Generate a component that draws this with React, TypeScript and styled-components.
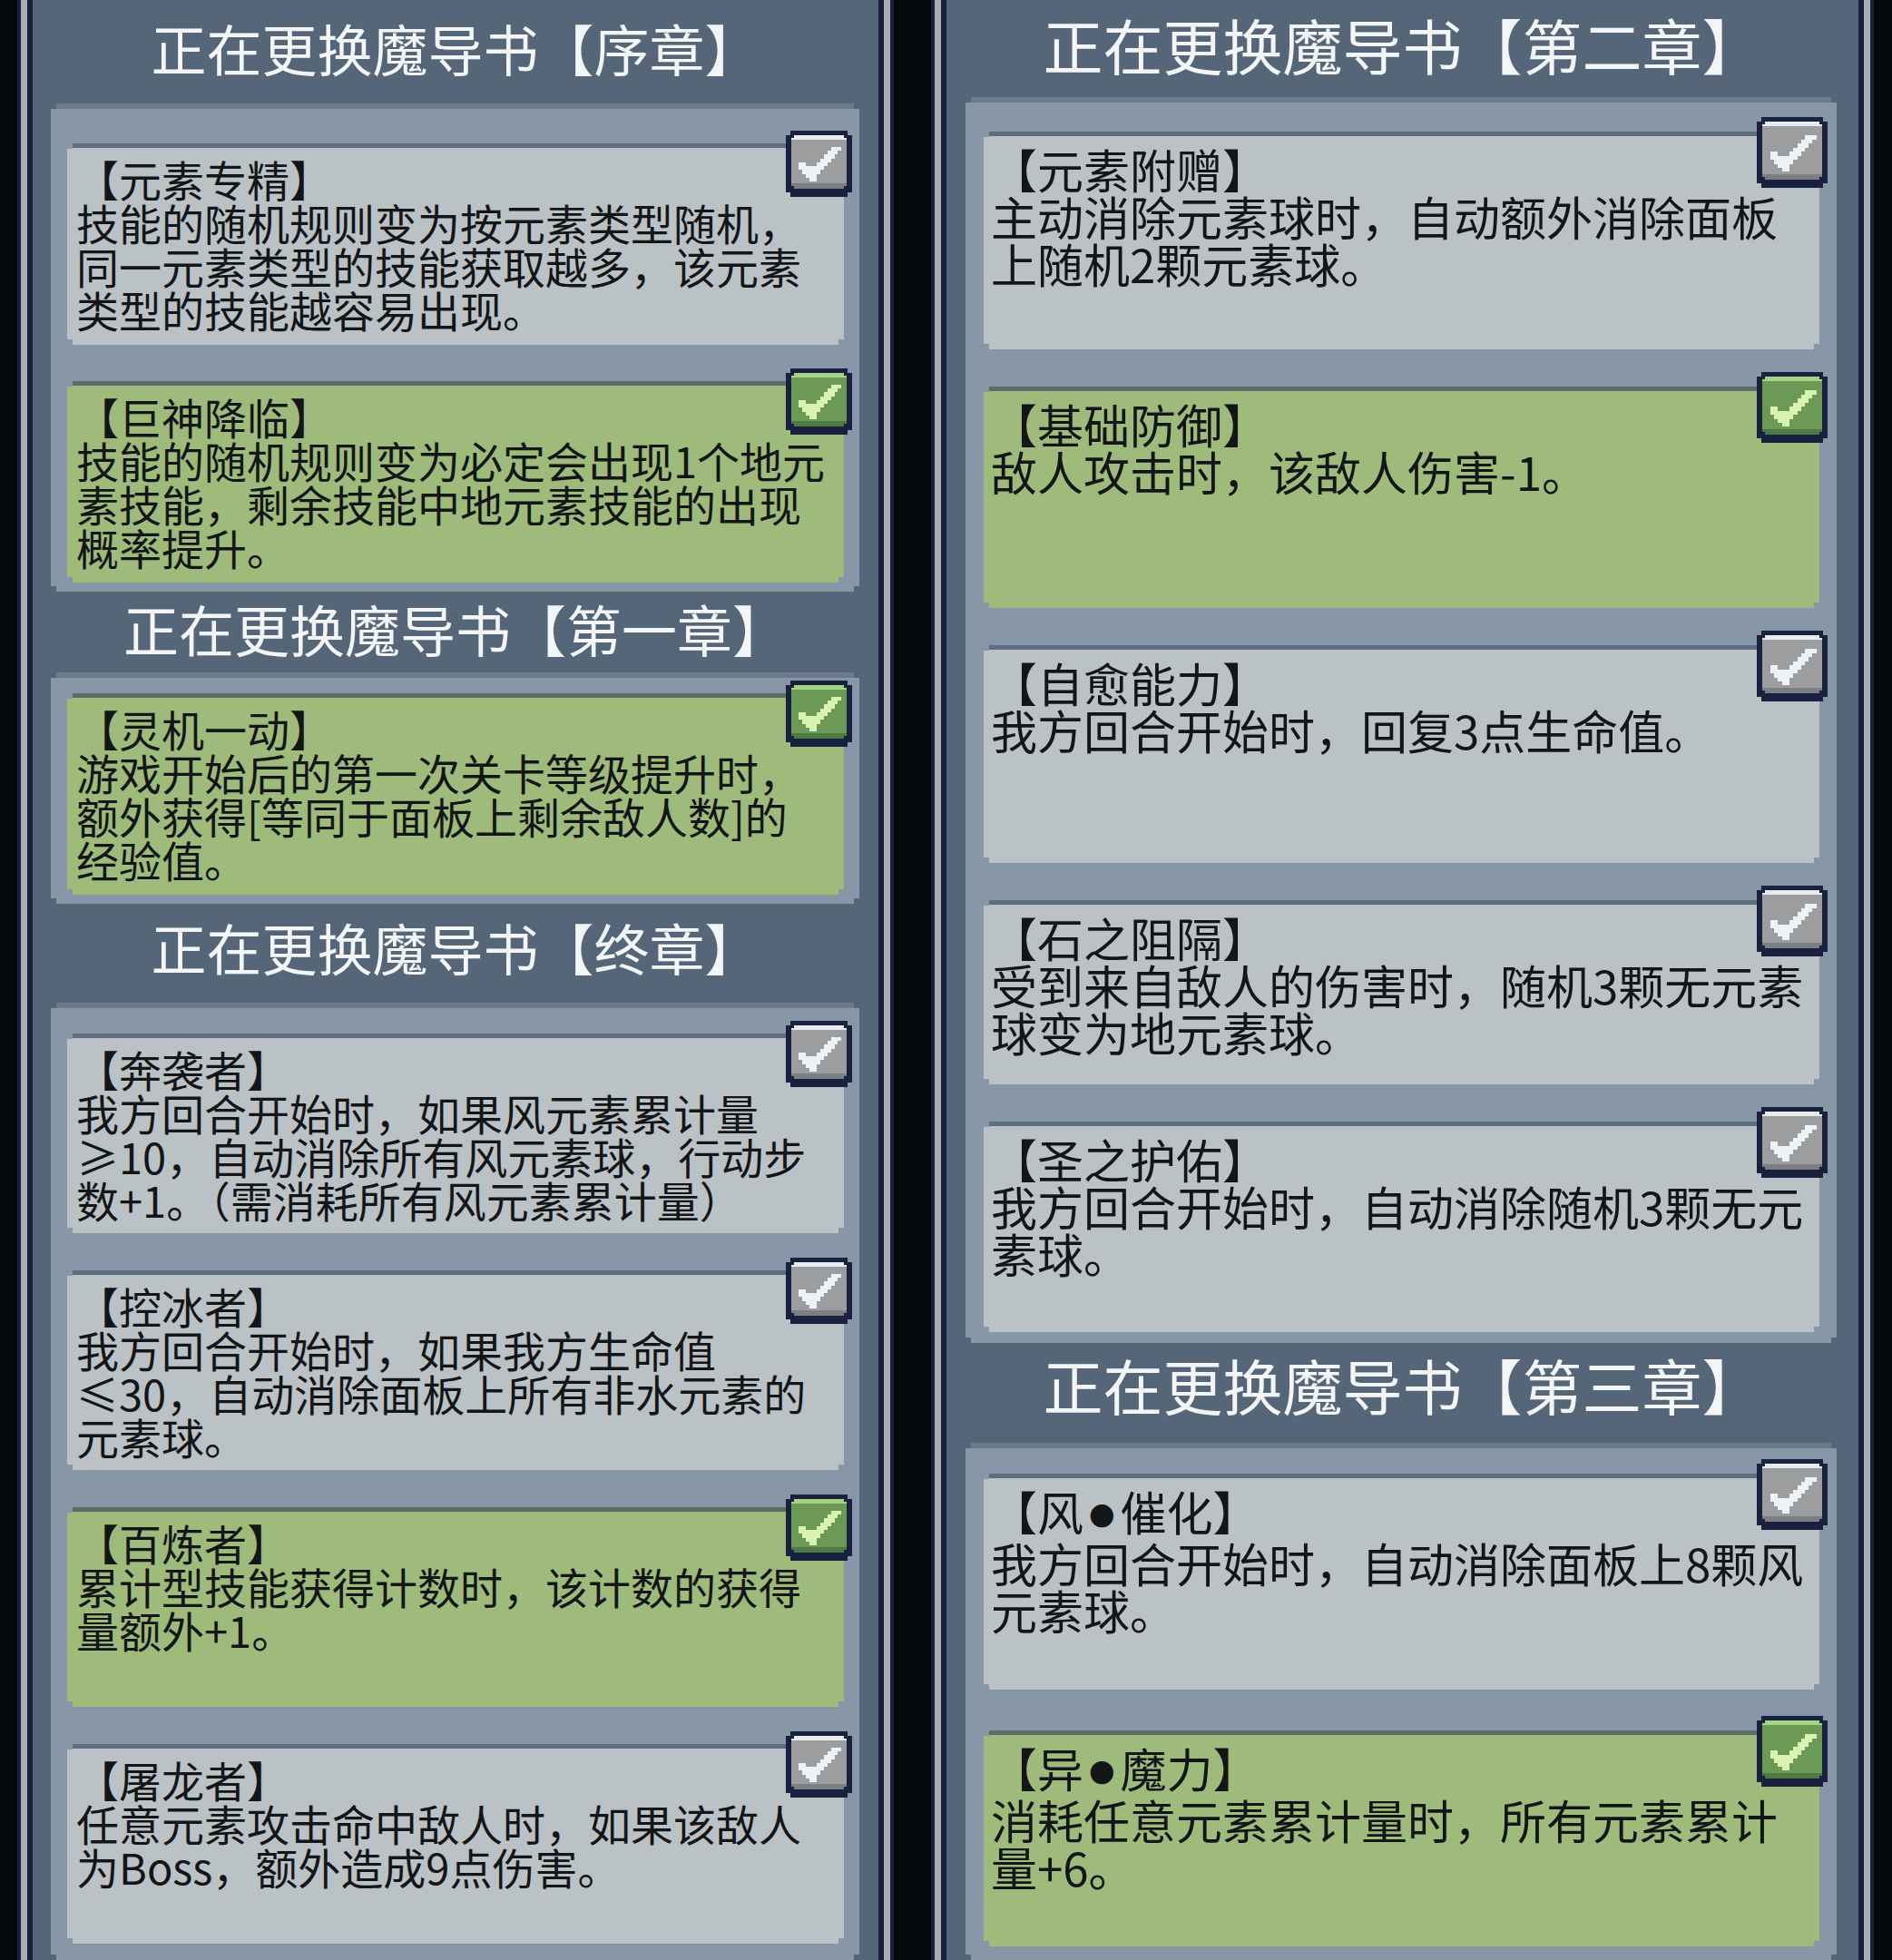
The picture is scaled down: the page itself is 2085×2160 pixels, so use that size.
import React from 'react';
import styled, { createGlobalStyle } from 'styled-components';

const GlobalStyle = createGlobalStyle`
  html, body {
    margin: 0;
    padding: 0;
    background: #05090c;
  }
  body {
    font-family: "Noto Sans CJK SC", "Noto Sans", sans-serif;
  }
`;

// pixel-art corners: cut an n x n square out of every corner
const notch = (n: number) =>
  `polygon(${n}px 0, calc(100% - ${n}px) 0, calc(100% - ${n}px) ${n}px, 100% ${n}px, 100% calc(100% - ${n}px), calc(100% - ${n}px) calc(100% - ${n}px), calc(100% - ${n}px) 100%, ${n}px 100%, ${n}px calc(100% - ${n}px), 0 calc(100% - ${n}px), 0 ${n}px, ${n}px ${n}px)`;

const Screen = styled.div`
  display: flex;
  gap: 63px;
  width: 2085px;
  height: 2160px;
  padding-left: 30px;
  box-sizing: border-box;
  overflow: hidden;
  background: #05090c;
`;

const Frame = styled.div<{ $w: number }>`
  flex: none;
  width: ${p => p.$w}px;
  height: 100%;
  box-sizing: border-box;
  display: flex;
  flex-direction: column;
  background: #556678;
  border-left: 6px solid #18203e;
  border-right: 6px solid #18203e;
  box-shadow: -7px 0 0 #a9adb3, 7px 0 0 #a9adb3, -11px 0 0 #18203e, 11px 0 0 #18203e;
`;

const Header = styled.div<{ $h: number; $pb: number; $size: number }>`
  flex: none;
  height: ${p => p.$h}px;
  padding-bottom: ${p => p.$pb}px;
  box-sizing: border-box;
  display: flex;
  align-items: center;
  justify-content: center;
  color: #f3f5f7;
  font-size: ${p => p.$size}px;
  line-height: 1;
  white-space: nowrap;
`;

const Shelf = styled.div<{
  $ml: number;
  $w: number;
  $pt: number;
  $pb: number;
  $pl: number;
  $pr: number;
  $gap: number;
  $grow?: boolean;
}>`
  flex: ${p => (p.$grow ? '1 0 auto' : 'none')};
  margin-left: ${p => p.$ml}px;
  width: ${p => p.$w}px;
  box-sizing: border-box;
  padding: ${p => p.$pt}px ${p => p.$pr}px ${p => p.$pb}px ${p => p.$pl}px;
  background: #8797a8;
  border-top: 6px solid #6b7b8d;
  clip-path: ${notch(6)};
  display: flex;
  flex-direction: column;
  gap: ${p => p.$gap}px;
`;

const CardWrap = styled.div<{ $h: number }>`
  position: relative;
  flex: none;
  height: ${p => p.$h}px;
`;

const Card = styled.div<{ $on: boolean; $font: number; $lh: number; $pl: number }>`
  height: 100%;
  box-sizing: border-box;
  background: ${p => (p.$on ? '#9ebb7b' : '#bbc2c5')};
  border-top: 5px solid ${p => (p.$on ? '#5b6d68' : '#5e6e80')};
  padding: 10px 0 0 ${p => p.$pl}px;
  clip-path: ${notch(6)};
  color: #131517;
  font-size: ${p => p.$font}px;
  line-height: ${p => p.$lh}px;
  font-weight: 400;
`;

const Line = styled.div`
  white-space: nowrap;
`;

const Dot = styled.span`
  font-size: 0.55em;
  margin: 0 0.22em;
  vertical-align: 0.18em;
`;

const Tick = styled.div<{ $size: number; $top: number }>`
  position: absolute;
  top: -${p => p.$top}px;
  right: -9px;
  width: ${p => p.$size}px;
  height: ${p => p.$size}px;
  background: #1a213f;
  clip-path: ${notch(5)};
`;

const TickFace = styled.div<{ $on: boolean }>`
  position: absolute;
  left: 6px;
  right: 6px;
  top: 5px;
  bottom: 9px;
  background: ${p => (p.$on ? '#6c9a56' : '#9b9d9e')};
  border-top: 5px solid ${p => (p.$on ? '#a6d486' : '#e6edf0')};
  box-shadow: inset 0 -6px 0 ${p => (p.$on ? '#4e7944' : '#7b7f82')};
  clip-path: ${notch(3)};
`;

const TickMark = styled.svg`
  position: absolute;
  left: 19%;
  top: 25%;
  width: 65%;
  height: 52%;
`;

const checkPixels: [number, number, number][] = [
  [9, 0, 3],
  [8, 1, 3],
  [7, 2, 3],
  [6, 3, 3],
  [0, 4, 2],
  [5, 4, 3],
  [0, 5, 7],
  [1, 6, 5],
  [2, 7, 3],
  [3, 8, 2],
];

const CheckBox: React.FC<{ on: boolean; size: number; top: number }> = ({ on, size, top }) => (
  <Tick $size={size} $top={top}>
    <TickFace $on={on} />
    <TickMark viewBox="0 0 12 9" preserveAspectRatio="none" shapeRendering="crispEdges">
      {checkPixels.map(([x, y, w]) => (
        <rect key={`${x}-${y}`} x={x} y={y} width={w} height={1} fill={on ? '#d9f4ae' : '#eef2f4'} />
      ))}
    </TickMark>
  </Tick>
);

// skill names like 风●催化 get a small centred dot
const SkillName: React.FC<{ name: string }> = ({ name }) => {
  const parts = name.split('●');
  return (
    <Line>
      {parts.map((part, i) => (
        <React.Fragment key={i}>
          {i > 0 && <Dot>●</Dot>}
          {part}
        </React.Fragment>
      ))}
    </Line>
  );
};

interface Skill {
  name: string;
  lines: string[];
  on?: boolean;
  h: number;
}

interface Chapter {
  title: string;
  headH: number;
  headPb: number;
  pt: number;
  pb: number;
  gap: number;
  grow?: boolean;
  skills: Skill[];
}

interface Side {
  w: number;
  shelfMl: number;
  shelfW: number;
  pl: number;
  pr: number;
  font: number;
  lh: number;
  titleSize: number;
  tick: number;
  tickTop: number;
  textPl: number;
  chapters: Chapter[];
}

const sides: Side[] = [
  {
    w: 944,
    shelfMl: 20,
    shelfW: 891,
    pl: 18,
    pr: 17,
    font: 47,
    lh: 48,
    titleSize: 61,
    tick: 73,
    tickTop: 14,
    textPl: 10,
    chapters: [
      {
        title: '正在更换魔导书【序章】',
        headH: 114,
        headPb: 10,
        pt: 38,
        pb: 10,
        gap: 40,
        skills: [
          {
            name: '【元素专精】',
            lines: ['技能的随机规则变为按元素类型随机，', '同一元素类型的技能获取越多，该元素', '类型的技能越容易出现。'],
            h: 222,
          },
          {
            name: '【巨神降临】',
            lines: ['技能的随机规则变为必定会出现1个地元', '素技能，剩余技能中地元素技能的出现', '概率提升。'],
            on: true,
            h: 222,
          },
        ],
      },
      {
        title: '正在更换魔导书【第一章】',
        headH: 89,
        headPb: 9,
        pt: 17,
        pb: 10,
        gap: 40,
        skills: [
          {
            name: '【灵机一动】',
            lines: ['游戏开始后的第一次关卡等级提升时，', '额外获得[等同于面板上剩余敌人数]的', '经验值。'],
            on: true,
            h: 222,
          },
        ],
      },
      {
        title: '正在更换魔导书【终章】',
        headH: 109,
        headPb: 14,
        pt: 28,
        pb: 10,
        gap: 41,
        grow: true,
        skills: [
          {
            name: '【奔袭者】',
            lines: ['我方回合开始时，如果风元素累计量', '≥10，自动消除所有风元素球，行动步', '数+1。（需消耗所有风元素累计量）'],
            h: 220,
          },
          {
            name: '【控冰者】',
            lines: ['我方回合开始时，如果我方生命值', '≤30，自动消除面板上所有非水元素的', '元素球。'],
            h: 220,
          },
          {
            name: '【百炼者】',
            lines: ['累计型技能获得计数时，该计数的获得', '量额外+1。'],
            on: true,
            h: 220,
          },
          {
            name: '【屠龙者】',
            lines: ['任意元素攻击命中敌人时，如果该敌人', '为Boss，额外造成9点伤害。'],
            h: 220,
          },
        ],
      },
    ],
  },
  {
    w: 1017,
    shelfMl: 21,
    shelfW: 960,
    pl: 20,
    pr: 19,
    font: 51,
    lh: 52,
    titleSize: 66,
    tick: 78,
    tickTop: 16,
    textPl: 8,
    chapters: [
      {
        title: '正在更换魔导书【第二章】',
        headH: 107,
        headPb: 11,
        pt: 32,
        pb: 12,
        gap: 41,
        skills: [
          {
            name: '【元素附赠】',
            lines: ['主动消除元素球时，自动额外消除面板', '上随机2颗元素球。'],
            h: 240,
          },
          {
            name: '【基础防御】',
            lines: ['敌人攻击时，该敌人伤害-1。'],
            on: true,
            h: 244,
          },
          {
            name: '【自愈能力】',
            lines: ['我方回合开始时，回复3点生命值。'],
            h: 240,
          },
          {
            name: '【石之阻隔】',
            lines: ['受到来自敌人的伤害时，随机3颗无元素', '球变为地元素球。'],
            h: 203,
          },
          {
            name: '【圣之护佑】',
            lines: ['我方回合开始时，自动消除随机3颗无元', '素球。'],
            h: 232,
          },
        ],
      },
      {
        title: '正在更换魔导书【第三章】',
        headH: 110,
        headPb: 20,
        pt: 28,
        pb: 10,
        gap: 45,
        grow: true,
        skills: [
          {
            name: '【风●催化】',
            lines: ['我方回合开始时，自动消除面板上8颗风', '元素球。'],
            h: 238,
          },
          {
            name: '【异●魔力】',
            lines: ['消耗任意元素累计量时，所有元素累计', '量+6。'],
            on: true,
            h: 238,
          },
        ],
      },
    ],
  },
];

const App: React.FC = () => (
  <>
    <GlobalStyle />
    <Screen>
      {sides.map((side, si) => (
        <Frame key={si} $w={side.w}>
          {side.chapters.map(ch => (
            <React.Fragment key={ch.title}>
              <Header $h={ch.headH} $pb={ch.headPb} $size={side.titleSize}>
                {ch.title}
              </Header>
              <Shelf
                $ml={side.shelfMl}
                $w={side.shelfW}
                $pt={ch.pt}
                $pb={ch.pb}
                $pl={side.pl}
                $pr={side.pr}
                $gap={ch.gap}
                $grow={ch.grow}
              >
                {ch.skills.map(sk => (
                  <CardWrap key={sk.name} $h={sk.h}>
                    <Card $on={!!sk.on} $font={side.font} $lh={side.lh} $pl={side.textPl}>
                      <SkillName name={sk.name} />
                      {sk.lines.map(l => (
                        <Line key={l}>{l}</Line>
                      ))}
                    </Card>
                    <CheckBox on={!!sk.on} size={side.tick} top={side.tickTop} />
                  </CardWrap>
                ))}
              </Shelf>
            </React.Fragment>
          ))}
        </Frame>
      ))}
    </Screen>
  </>
);

export default App;
